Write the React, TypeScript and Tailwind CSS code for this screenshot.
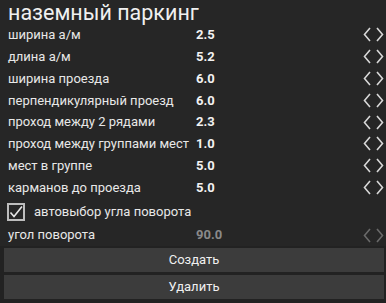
import React from 'react';

type Row = { label: string; value: string; disabled?: boolean };

const rows: Row[] = [
  { label: 'ширина а/м', value: '2.5' },
  { label: 'длина а/м', value: '5.2' },
  { label: 'ширина проезда', value: '6.0' },
  { label: 'перпендикулярный проезд', value: '6.0' },
  { label: 'проход между 2 рядами', value: '2.3' },
  { label: 'проход между группами мест', value: '1.0' },
  { label: 'мест в группе', value: '5.0' },
  { label: 'карманов до проезда', value: '5.0' },
];

const Arrows = ({ disabled = false }: { disabled?: boolean }) => (
  <svg width="21" height="15" viewBox="0 0 21 15" className={disabled ? 'text-[#6a6a6a]' : 'text-[#d8d8d8]'}>
    <path d="M7 1 L1.5 7.5 L7 14" fill="none" stroke="currentColor" strokeWidth="1.6" />
    <path d="M14 1 L19.5 7.5 L14 14" fill="none" stroke="currentColor" strokeWidth="1.6" />
  </svg>
);

const ParamRow = ({ label, value, disabled }: Row) => (
  <div className="flex items-center h-[22px] pl-2 pr-[2px]">
    <span className="w-[188px] text-[13px] text-[#e8e8e8]">{label}</span>
    <span className={`flex-1 text-[13px] font-bold ${disabled ? 'text-[#8a8a8a]' : 'text-[#f2f2f2]'}`}>{value}</span>
    <Arrows disabled={disabled} />
  </div>
);

export default function App() {
  return (
    <div
      className="w-[386px] h-[303px] bg-[#262626] overflow-hidden flex flex-col"
      style={{ fontFamily: 'Roboto, "Liberation Sans", sans-serif' }}
    >
      <div className="pl-2 h-[24px] text-[21.5px] leading-[25px] text-[#f0f0f0] whitespace-nowrap">наземный паркинг</div>
      {rows.map((r) => (
        <ParamRow key={r.label} {...r} />
      ))}
      <div className="flex items-center h-[25px] pl-[7px] mt-[1px]">
        <span className="w-[18px] h-[18px] border-2 border-[#bdbdbd] flex items-center justify-center">
          <svg width="14" height="14" viewBox="0 0 14 14">
            <path d="M1.5 7.5 L5 11.5 L13 1.5" fill="none" stroke="#e6e6e6" strokeWidth="1.6" />
          </svg>
        </span>
        <span className="ml-[9px] text-[13px] text-[#e8e8e8]">автовыбор угла поворота</span>
      </div>
      <ParamRow label="угол поворота" value="90.0" disabled />
      <div className="flex-1 flex flex-col gap-[3px] pl-[4px] pr-[2px] pt-[2px] pb-[4px] bg-[#222222]">
        <button className="h-[24px] bg-[#3c3c3c] text-[13px] text-[#f0f0f0]">Создать</button>
        <button className="h-[24px] bg-[#3c3c3c] text-[13px] text-[#f0f0f0]">Удалить</button>
      </div>
    </div>
  );
}
